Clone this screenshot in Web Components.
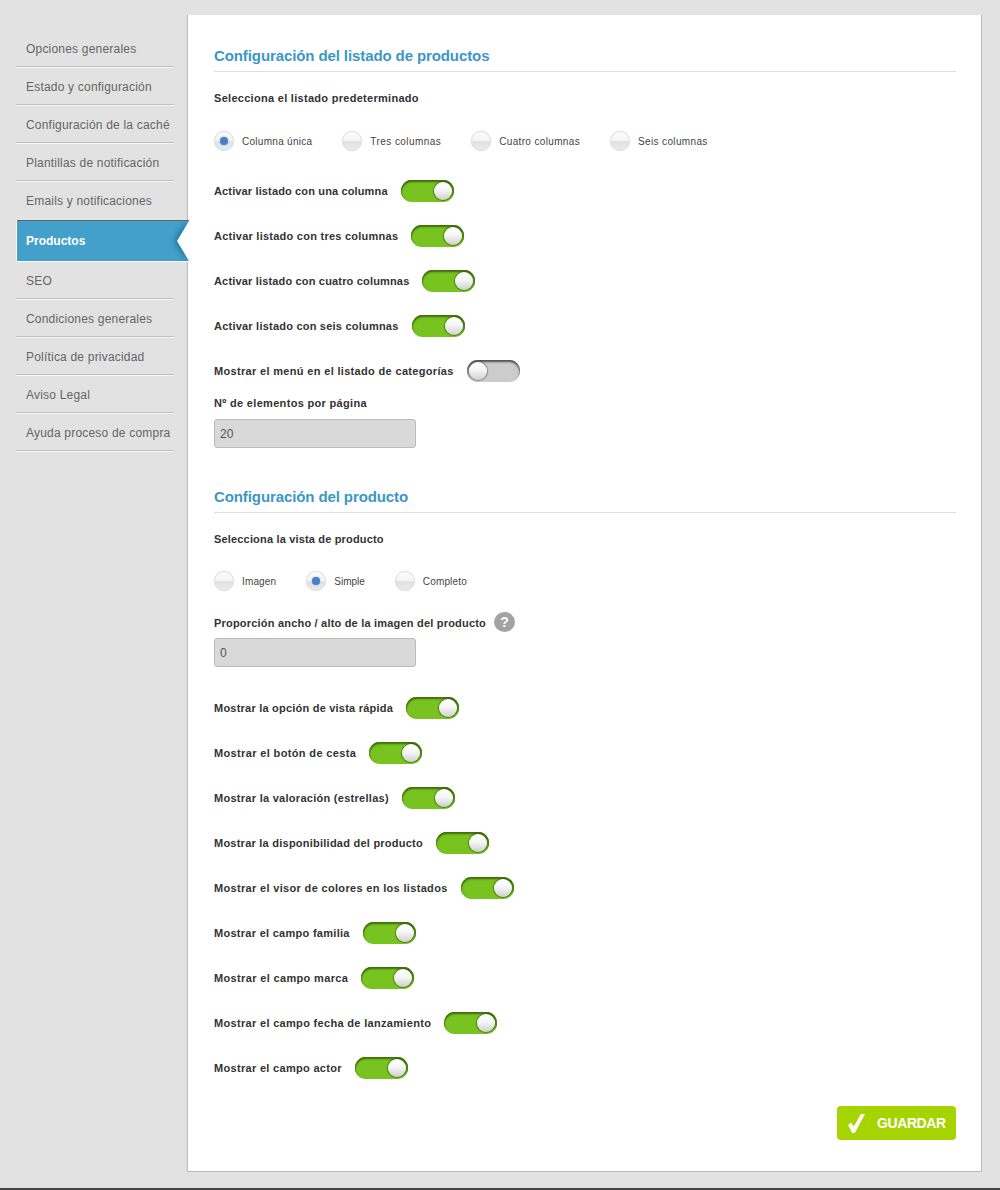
<!DOCTYPE html>
<html lang="es">
<head>
<meta charset="utf-8">
<title>Configuración</title>
<style>
html, body { margin: 0; padding: 0; background: #e2e2e2; }
body { font-family: "Liberation Sans", Arial, sans-serif; color: #333; }
</style>
</head>
<body>
<ui-page>
    <ui-nav slot="nav">
        <ui-nav-item>Opciones generales</ui-nav-item>
        <ui-nav-item>Estado y configuración</ui-nav-item>
        <ui-nav-item>Configuración de la caché</ui-nav-item>
        <ui-nav-item>Plantillas de notificación</ui-nav-item>
        <ui-nav-item plain>Emails y notificaciones</ui-nav-item>
        <ui-nav-item active>Productos</ui-nav-item>
        <ui-nav-item>SEO</ui-nav-item>
        <ui-nav-item>Condiciones generales</ui-nav-item>
        <ui-nav-item>Política de privacidad</ui-nav-item>
        <ui-nav-item>Aviso Legal</ui-nav-item>
        <ui-nav-item>Ayuda proceso de compra</ui-nav-item>
    </ui-nav>

    <ui-section title="Configuración del listado de productos">
        <ui-label style="--ls:.29px">Selecciona el listado predeterminado</ui-label>
        <ui-radios style="margin-top:22px;margin-bottom:29px">
            <ui-radio checked style="--ls:.28px">Columna única</ui-radio>
            <ui-radio style="--ls:.43px">Tres columnas</ui-radio>
            <ui-radio style="--ls:.35px">Cuatro columnas</ui-radio>
            <ui-radio style="--ls:.36px">Seis columnas</ui-radio>
        </ui-radios>
        <ui-toggle on style="--ls:.14px">Activar listado con una columna</ui-toggle>
        <ui-toggle on style="--ls:.25px">Activar listado con tres columnas</ui-toggle>
        <ui-toggle on style="--ls:.17px">Activar listado con cuatro columnas</ui-toggle>
        <ui-toggle on style="--ls:.22px">Activar listado con seis columnas</ui-toggle>
        <ui-toggle style="margin-bottom:0;--ls:.33px">Mostrar el menú en el listado de categorías</ui-toggle>
        <ui-label style="margin-top:10px;--ls:.32px">Nº de elementos por página</ui-label>
        <ui-input value="20"></ui-input>
    </ui-section>

    <ui-section title="Configuración del producto" style="margin-top:34px">
        <ui-label style="--ls:.17px">Selecciona la vista de producto</ui-label>
        <ui-radios style="margin-top:21px;margin-bottom:20px">
            <ui-radio style="--ls:.15px">Imagen</ui-radio>
            <ui-radio checked style="--ls:0">Simple</ui-radio>
            <ui-radio style="--ls:.15px">Completo</ui-radio>
        </ui-radios>
        <ui-label style="--ls:.2px;height:20px;padding-top:2px">Proporción ancho / alto de la imagen del producto<ui-help slot="after"></ui-help></ui-label>
        <ui-input value="0" style="margin-bottom:30px"></ui-input>
        <ui-toggle on style="--ls:.22px">Mostrar la opción de vista rápida</ui-toggle>
        <ui-toggle on style="--ls:.36px">Mostrar el botón de cesta</ui-toggle>
        <ui-toggle on style="--ls:.28px">Mostrar la valoración (estrellas)</ui-toggle>
        <ui-toggle on style="--ls:.24px">Mostrar la disponibilidad del producto</ui-toggle>
        <ui-toggle on style="--ls:.33px">Mostrar el visor de colores en los listados</ui-toggle>
        <ui-toggle on style="--ls:.28px">Mostrar el campo familia</ui-toggle>
        <ui-toggle on style="--ls:.35px">Mostrar el campo marca</ui-toggle>
        <ui-toggle on style="--ls:.32px">Mostrar el campo fecha de lanzamiento</ui-toggle>
        <ui-toggle on style="margin-bottom:0;--ls:.31px">Mostrar el campo actor</ui-toggle>
    </ui-section>

    <ui-save-button>GUARDAR</ui-save-button>
</ui-page>

<script>
// small helper, every element gets an open shadow root with its own styles
function shadow(el, html) {
    el.attachShadow({ mode: 'open' }).innerHTML = html;
}

class UIPage extends HTMLElement {
    connectedCallback() {
        shadow(this, `
<style>
:host { display: block; height: 1188px; border-bottom: 2px solid #444; overflow: hidden; }
.wrap { display: flex; align-items: flex-start; padding: 15px 18px 0 16px; }
.side { width: 172px; flex: none; padding-top: 14px; position: relative; z-index: 1; }
.panel {
    flex: 1; height: 1157px; box-sizing: border-box; background: #fff;
    padding: 26px 25px 0 26px;
    border-right: 1px solid #bbb; border-bottom: 1px solid #bbb;
    box-shadow: -1px 0 1px #bdbdbd;
    clip-path: inset(0 0 0 -3px);
    display: flex; flex-direction: column;
}
</style>
<div class="wrap">
    <div class="side"><slot name="nav"></slot></div>
    <div class="panel"><slot></slot></div>
</div>`);
    }
}

class UINav extends HTMLElement {
    connectedCallback() {
        shadow(this, `
<style>:host { display: block; }</style>
<slot></slot>`);
    }
}

class UINavItem extends HTMLElement {
    connectedCallback() {
        shadow(this, `
<style>
:host {
    display: block; height: 38px; box-sizing: border-box; width: 158px;
    padding-left: 10px; line-height: 40px;
    font-size: 12px; letter-spacing: .2px; color: #666;
    border-bottom: 1px solid #c0c0c0;
    box-shadow: 0 1px 0 #f6f6f6;
}
:host([plain]) { border-bottom: 0; box-shadow: none; }
:host([active]) {
    position: relative; width: 172px; height: 42px; margin: 1px 0 -1px 1px; padding-left: 9px;
    line-height: 40px; font-weight: bold; color: #fff; letter-spacing: 0;
    background: #43a0ca; overflow: hidden;
    border-top: 1px solid #666; border-bottom: 1px solid #fff;
    box-shadow: -1px 0 0 #fff;
}
.notch { display: none; }
:host([active]) .notch {
    display: block; position: absolute; right: 0; top: 0; bottom: 0; width: 12px;
    filter: drop-shadow(-2px 0 3px #1d6a8e);
}
.notch i {
    display: block; height: 100%;
    clip-path: polygon(100% 0, 0 50%, 100% 100%);
    background: #fff;
}
</style>
<slot></slot><span class="notch"><i></i></span>`);
    }
}

class UISection extends HTMLElement {
    connectedCallback() {
        shadow(this, `
<style>
:host { display: block; }
h2 {
    margin: 0 0 15px; height: 31px; box-sizing: border-box; line-height: 30px;
    font-size: 15px; font-weight: bold; color: #3a97c6; letter-spacing: -.1px;
    border-bottom: 1px solid #ddd;
}
</style>
<h2>${this.getAttribute('title')}</h2>
<slot></slot>`);
        this.removeAttribute('title');
    }
}

class UILabel extends HTMLElement {
    connectedCallback() {
        shadow(this, `
<style>
:host {
    display: flex; align-items: center; gap: 8px; height: 22px;
    font-size: 11px; font-weight: bold; color: #333; letter-spacing: var(--ls, .3px);
}
</style>
<span><slot></slot></span><slot name="after"></slot>`);
    }
}

class UIRadios extends HTMLElement {
    connectedCallback() {
        shadow(this, `
<style>:host { display: flex; gap: 30px; height: 20px; }</style>
<slot></slot>`);
    }
}

class UIRadio extends HTMLElement {
    connectedCallback() {
        shadow(this, `
<style>
:host { display: flex; align-items: center; gap: 8px; font-size: 10px; letter-spacing: var(--ls, .3px); color: #444; }
.dot {
    width: 20px; height: 20px; box-sizing: border-box; border-radius: 50%;
    border: 1px solid #ddd;
    background: linear-gradient(to bottom, #fcfcfc 0, #f4f4f4 48%, #e0e0e0 54%, #ececec 100%);
    box-shadow: 0 0 1px rgba(0,0,0,.15);
    display: flex; align-items: center; justify-content: center;
}
:host([checked]) .dot::after {
    content: ''; width: 8px; height: 8px; border-radius: 50%;
    background: #4a80c4; box-shadow: 0 0 2px #7ea5d8;
}
</style>
<span class="dot"></span><span><slot></slot></span>`);
    }
}

class UIToggle extends HTMLElement {
    connectedCallback() {
        shadow(this, `
<style>
:host {
    display: flex; align-items: center; gap: 13px; height: 22px; margin-bottom: 23px;
    font-size: 11px; font-weight: bold; color: #333; letter-spacing: var(--ls, .3px);
}
.track {
    width: 53px; height: 22px; box-sizing: border-box; border-radius: 11px; flex: none;
    display: flex; align-items: center; padding: 1px;
    background: #ccc; box-shadow: inset 0 2px 2px #555, inset 1px 1px 1px #999, inset -1px 1px 1px #aaa;
}
:host([on]) .track {
    justify-content: flex-end; background: #78c31f;
    box-shadow: inset 0 2px 2px #3f6d0e, inset 1px 1px 1px #5a9a1a, inset -1px 1px 1px #55901a;
}
.knob {
    width: 18px; height: 18px; border-radius: 50%; margin: 1px;
    background: linear-gradient(to bottom, #fff 0, #f6f6f6 45%, #cfcfcf 100%);
    box-shadow: 0 0 1px 1px rgba(40,70,10,.55);
}
:host(:not([on])) .knob { box-shadow: 0 0 1px 1px rgba(60,60,60,.5); }
</style>
<span><slot></slot></span><span class="track"><span class="knob"></span></span>`);
    }
}

class UIInput extends HTMLElement {
    connectedCallback() {
        shadow(this, `
<style>
:host { display: block; margin-top: 5px; }
input {
    display: block; width: 202px; height: 29px; box-sizing: border-box; padding: 0 5px; margin: 0;
    font: 12px "Liberation Sans", Arial, sans-serif; color: #555;
    background: #d9d9d9; border: 1px solid #bbb; border-radius: 3px; outline: 0;
}
</style>
<input type="text" value="${this.getAttribute('value')}" readonly>`);
    }
}

class UIHelp extends HTMLElement {
    connectedCallback() {
        shadow(this, `
<style>
:host {
    display: inline-flex; align-items: center; justify-content: center; margin-bottom: 2px;
    width: 21px; height: 20px; border-radius: 50%; background: #a3a3a3;
    color: #fff; font-size: 14px; font-weight: bold; letter-spacing: 0;
}
</style>?`);
    }
}

class UISaveButton extends HTMLElement {
    connectedCallback() {
        shadow(this, `
<style>
:host {
    display: flex; align-items: center; align-self: flex-end; box-sizing: border-box;
    width: 119px; height: 34px; margin-top: 27px; padding-left: 11px; gap: 11px;
    background: #a5d400; border-radius: 4px;
    color: #fff; font-size: 14px; font-weight: bold; letter-spacing: -.4px;
}
svg { flex: none; }
</style>
<svg width="18" height="19" viewBox="0 0 18 19"><path d="M0 11l3-2.500 2.800 4L12.800 0 17 0 6.800 19 4.200 19z" fill="#fff"/></svg><slot></slot>`);
    }
}

customElements.define('ui-page', UIPage);
customElements.define('ui-nav', UINav);
customElements.define('ui-nav-item', UINavItem);
customElements.define('ui-section', UISection);
customElements.define('ui-label', UILabel);
customElements.define('ui-radios', UIRadios);
customElements.define('ui-radio', UIRadio);
customElements.define('ui-toggle', UIToggle);
customElements.define('ui-input', UIInput);
customElements.define('ui-help', UIHelp);
customElements.define('ui-save-button', UISaveButton);
</script>
</body>
</html>
